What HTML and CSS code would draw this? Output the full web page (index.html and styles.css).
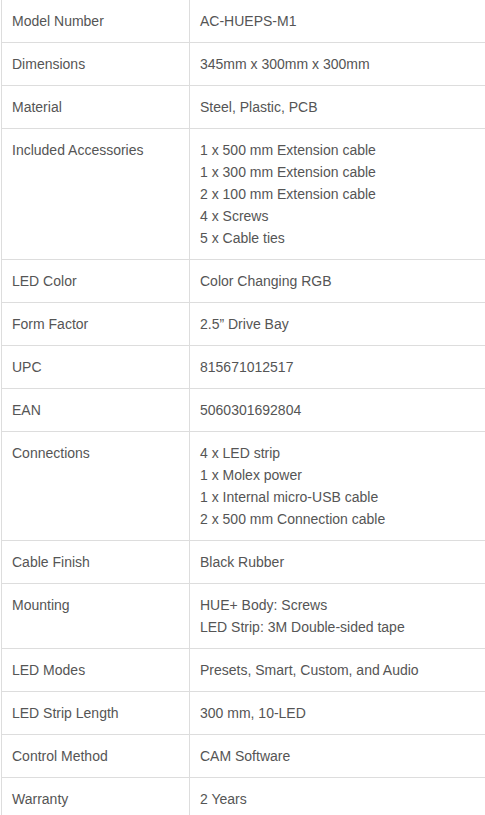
FILE: index.html
```html
<!DOCTYPE html>
<html lang="en">
<head>
<meta charset="utf-8">
<title>Specifications</title>
<link rel="stylesheet" href="styles.css">
</head>
<body>
<table class="specs">
  <colgroup><col class="col-label"><col class="col-value"></colgroup>
  <tbody>
    <tr><td>Model Number</td><td>AC-HUEPS-M1</td></tr>
    <tr><td>Dimensions</td><td>345mm x 300mm x 300mm</td></tr>
    <tr><td>Material</td><td>Steel, Plastic, PCB</td></tr>
    <tr><td>Included Accessories</td><td>1 x 500 mm Extension cable<br>1 x 300 mm Extension cable<br>2 x 100 mm Extension cable<br>4 x Screws<br>5 x Cable ties</td></tr>
    <tr><td>LED Color</td><td>Color Changing RGB</td></tr>
    <tr><td>Form Factor</td><td>2.5” Drive Bay</td></tr>
    <tr><td>UPC</td><td>815671012517</td></tr>
    <tr><td>EAN</td><td>5060301692804</td></tr>
    <tr><td>Connections</td><td>4 x LED strip<br>1 x Molex power<br>1 x Internal micro-USB cable<br>2 x 500 mm Connection cable</td></tr>
    <tr><td>Cable Finish</td><td>Black Rubber</td></tr>
    <tr><td>Mounting</td><td>HUE+ Body: Screws<br>LED Strip: 3M Double-sided tape</td></tr>
    <tr><td>LED Modes</td><td>Presets, Smart, Custom, and Audio</td></tr>
    <tr><td>LED Strip Length</td><td>300 mm, 10-LED</td></tr>
    <tr><td>Control Method</td><td>CAM Software</td></tr>
    <tr><td>Warranty</td><td>2 Years</td></tr>
  </tbody>
</table>
</body>
</html>
```
FILE: styles.css
```css
html, body {
  margin: 0;
  padding: 0;
  background: #fff;
}
body {
  overflow: hidden;
}
.specs {
  border-collapse: collapse;
  table-layout: fixed;
  width: 500px;
  margin: -1px 0 0 1px;
  font-family: "Liberation Sans", Arial, sans-serif;
  font-size: 14px;
  line-height: 22px;
  color: #555;
}
.col-label { width: 188px; }
.col-value { width: 312px; }
.specs td {
  border: 1px solid #ddd;
  padding: 10px 10px;
  vertical-align: top;
  text-align: left;
}
```
